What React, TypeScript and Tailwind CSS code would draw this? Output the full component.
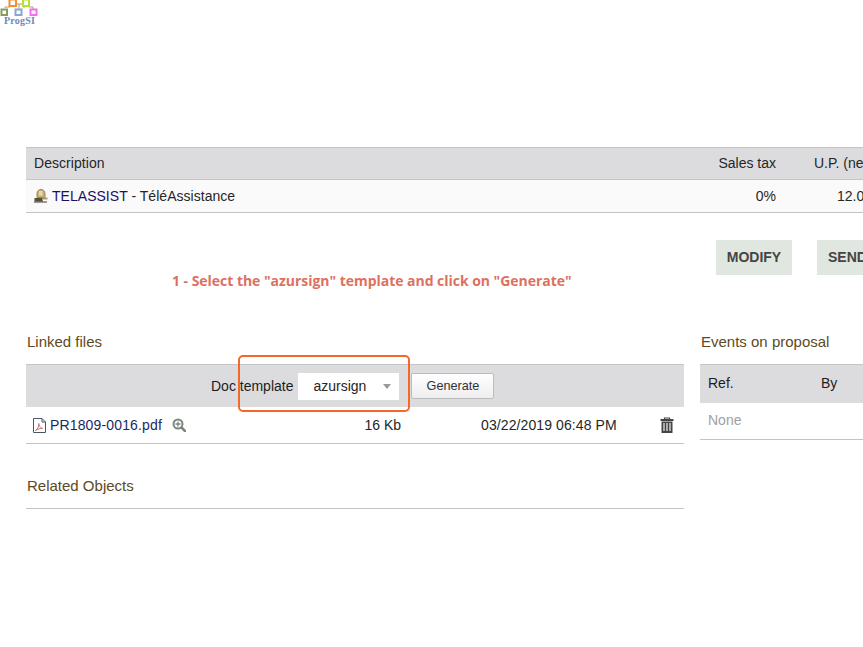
import React from "react";

function Logo() {
  return (
    <div className="relative h-[25px] w-[40px]">
      <svg width="40" height="25" viewBox="0 0 40 25" className="block">
        <path d="M5 8V7h5M16 4h7M19 4v5M24 7v1M29 7h4v2" stroke="#b89a78" strokeWidth="1" fill="none" />
        <rect x="9.500" y="-0.500" width="6.500" height="6.500" fill="#fff" stroke="#f09030" strokeWidth="2" />
        <rect x="23" y="-0.500" width="6" height="6.500" fill="#fff" stroke="#b8e030" strokeWidth="2" />
        <rect x="1.500" y="9.500" width="5.500" height="5.500" fill="#fff" stroke="#8c9a60" strokeWidth="2" />
        <rect x="15.500" y="9.500" width="6" height="5.500" fill="#fff" stroke="#88a8d0" strokeWidth="2" />
        <rect x="30.500" y="9.500" width="6" height="5.500" fill="#fff" stroke="#f070f0" strokeWidth="2" />
      </svg>
      <span className="absolute left-[4px] top-[15px] font-['Liberation_Serif',serif] text-[10px] font-bold leading-[11px] tracking-[0.2px] text-[#7488b8]">
        ProgSI
      </span>
    </div>
  );
}

function PackageIcon() {
  return (
    <svg width="14" height="14" viewBox="0 0 14 14" className="shrink-0">
      <path d="M3 8.500V4.500C3 2 4.800 0.500 7 0.500s4 1.500 4 4v4z" fill="#c9b078" stroke="#8a7440" strokeWidth="0.8" />
      <path d="M5 2h3.500v4.500H5z" fill="#e8d8a8" />
      <path d="M0.500 9h7.500l1 3.500H0.500z" fill="#55503c" />
      <path d="M8 8.500h5.500v2H8z" fill="#a89868" />
      <path d="M0 13h13" stroke="#3c3828" strokeWidth="1" />
    </svg>
  );
}

function PdfIcon() {
  return (
    <svg width="13" height="15" viewBox="0 0 13 15" fill="none" className="shrink-0">
      <path d="M0.500 0.500h8.500l3.500 3.500v10.500h-12z" fill="#fff" stroke="#4a5568" strokeWidth="1" />
      <path d="M9 0.500v3.500h3.500" stroke="#4a5568" strokeWidth="1" />
      <path d="M2.500 12.500c2-1 3.300-3.700 3.300-7 0 2 1 4 3.700 5-2-.2-5 .4-7 2z" stroke="#b86a70" strokeWidth="0.9" />
    </svg>
  );
}

function ZoomIcon() {
  return (
    <svg width="14" height="14" viewBox="0 0 14 14" fill="none" className="shrink-0">
      <circle cx="6" cy="6" r="4.500" stroke="#7b867d" strokeWidth="2" />
      <path d="M9.500 9.500L13 13" stroke="#7b867d" strokeWidth="2.500" strokeLinecap="round" />
      <path d="M3.500 6h5M6 3.500v5" stroke="#7b867d" strokeWidth="1.300" />
    </svg>
  );
}

function TrashIcon() {
  return (
    <svg width="14" height="16" viewBox="0 0 14 16" className="shrink-0">
      <path d="M4.500 2.500V1h5v1.500" fill="none" stroke="#444" strokeWidth="1.200" />
      <path d="M0.500 2h13v2H0.500z" fill="#444" />
      <path d="M1.500 4.500h11V16h-11z" fill="#444" />
      <path d="M4 6v8M7 6v8M10 6v8" stroke="#fff" strokeWidth="1.100" />
    </svg>
  );
}

export default function App() {
  return (
    <div className="relative h-[647px] w-[863px] overflow-hidden bg-white font-['Liberation_Sans',Arial,sans-serif] text-[14px] text-[#262626]">
      <Logo />

      <div className="mt-[122px] pl-[26px]">
        <div className="w-[837px]">
          <div className="flex h-[33px] items-center border-y border-[#c4c4c4] bg-[#dcdcdf] pl-[8px] pb-[1px]">
            <span className="flex-1 tracking-[0.05px]">Description</span>
            <span className="w-[62px] whitespace-nowrap text-right">Sales tax</span>
            <span className="ml-[38px] w-[49px] overflow-hidden whitespace-nowrap">U.P. (net)</span>
          </div>
          <div className="flex h-[33px] items-center border-b border-[#c4c4c4] bg-[#fafafa] pl-[8px]">
            <span className="flex flex-1 items-center gap-[4px]">
              <PackageIcon />
              <span className="tracking-[0.03px]">
                <span className="text-[#1a1064]">TELASSIST</span> - TéléAssistance
              </span>
            </span>
            <span className="w-[62px] text-right">0%</span>
            <span className="ml-[10px] w-[77px] overflow-hidden whitespace-nowrap pl-[51px]">12.00</span>
          </div>
        </div>

        <div className="mt-[27px] flex w-[837px] gap-[25px] pl-[690px]">
          <div className="flex h-[35px] w-[76px] shrink-0 items-center justify-center bg-[#e0e7e0] text-[14px] font-bold text-[#444]">
            MODIFY
          </div>
          <div className="flex h-[35px] w-[76px] shrink-0 items-center bg-[#e0e7e0] pl-[11px] text-[14px] font-bold text-[#444]">
            SEND
          </div>
        </div>

        <p className="-mt-[4px] ml-[146px] whitespace-nowrap font-['Open_Sans',sans-serif] text-[14px] font-bold leading-[20px] tracking-[-0.03px] text-[#dd7160]">
          1 - Select the "azursign" template and click on "Generate"
        </p>

        <div className="mt-[41px] flex gap-[16px]">
          <div className="w-[658px] shrink-0">
            <h3 className="pl-[1px] text-[15px] leading-[20px] text-[#5e4a1e]">Linked files</h3>
            <div className="mt-[12px] flex h-[43px] items-center border-t border-[#c4c4c4] bg-[#dcdcdf] pl-[185px]">
              <span className="text-[14px] leading-[20px] text-[#1c1c1c]">Doc template</span>
              <div className="ml-[5px] flex h-[27px] w-[101px] items-center bg-white pl-[15px]">
                <span className="flex-1">azursign</span>
                <span className="mr-[8px] h-0 w-0 border-x-[4px] border-t-[5px] border-x-transparent border-t-[#999]" />
              </div>
              <button className="ml-[12px] h-[26px] w-[83px] rounded-[2px] border border-[#bcbcbc] bg-gradient-to-b from-white to-[#eeeeee] pt-[1px] text-[12.700px] text-[#333]">
                Generate
              </button>
            </div>
            <div className="flex h-[37px] items-center border-b border-[#c4c4c4] pl-[7px]">
              <PdfIcon />
              <span className="ml-[4px] tracking-[0.15px] text-[#1a2a64]">PR1809-0016.pdf</span>
              <span className="ml-[10px]"><ZoomIcon /></span>
              <span className="ml-[177px] w-[38px] text-right">16 Kb</span>
              <span className="ml-[80px] whitespace-nowrap tracking-[0.1px]">03/22/2019 06:48 PM</span>
              <span className="ml-[43px]"><TrashIcon /></span>
            </div>
            <h3 className="mt-[32px] pl-[1px] text-[15px] leading-[20px] text-[#5e4a1e]">Related Objects</h3>
            <div className="mt-[12px] border-b border-[#c4c4c4]" />
          </div>

          <div className="w-[200px] shrink-0">
            <h3 className="pl-[1px] text-[15px] leading-[20px] text-[#5e4a1e]">Events on proposal</h3>
            <div className="mt-[12px] flex h-[39px] items-center border-t border-[#c4c4c4] bg-[#dcdcdf] pb-[2px] pl-[8px] text-[#1c1c1c]">
              <span className="w-[113px]">Ref.</span>
              <span>By</span>
            </div>
            <div className="flex h-[37px] items-center border-b border-[#c4c4c4] pb-[2px] pl-[8px] text-[#a0a0a0]">None</div>
          </div>
        </div>
      </div>

      <div className="pointer-events-none absolute left-[238px] top-[355px] h-[57px] w-[172px] rounded-[5px] border-2 border-[#f4692a]" />
    </div>
  );
}
